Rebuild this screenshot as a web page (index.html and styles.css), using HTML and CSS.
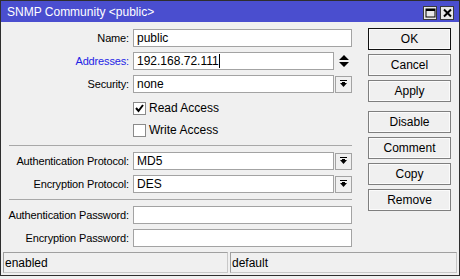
FILE: index.html
```html
<!DOCTYPE html>
<html>
<head>
<meta charset="utf-8">
<link rel="stylesheet" href="styles.css">
</head>
<body>
<div class="window">
  <div class="titlebar">
    <span class="title">SNMP Community &lt;public&gt;</span>
    <div class="tbtns">
      <div class="tbtn"><svg width="11" height="10" viewBox="0 0 11 10"><rect x="1" y="1" width="9" height="8" fill="none" stroke="#000" stroke-width="1"/><rect x="1" y="1" width="9" height="2" fill="#000"/></svg></div>
      <div class="tbtn"><svg width="11" height="10" viewBox="0 0 11 10"><path d="M2 1.5 L9 8.5 M9 1.5 L2 8.5" stroke="#000" stroke-width="2" fill="none"/></svg></div>
    </div>
  </div>
  <div class="content">
    <div class="form">
      <div class="row">
        <label class="lbl">Name:</label>
        <div class="ctl"><div class="field wide">public</div></div>
      </div>
      <div class="row">
        <label class="lbl blue">Addresses:</label>
        <div class="ctl"><div class="field">192.168.72.111<span class="caret"></span></div>
          <div class="updown"><svg width="10" height="13" viewBox="0 0 10 13"><path d="M5 0 L10 5 L0 5 Z M0 7 L10 7 L5 12 Z" fill="#000"/></svg></div>
        </div>
      </div>
      <div class="row">
        <label class="lbl">Security:</label>
        <div class="ctl"><div class="field">none</div><div class="drop"><svg width="7" height="8" viewBox="0 0 7 8"><rect x="0" y="0" width="7" height="1" fill="#000"/><path d="M0 3 L7 3 L3.5 7 Z" fill="#000"/><rect x="2" y="2" width="3" height="2" fill="#000"/></svg></div></div>
      </div>
      <div class="crow first">
        <span class="spacer"></span>
        <div class="check"><span class="box"><svg width="11" height="11" viewBox="0 0 11 11"><path d="M2 5 L4.5 8 L9 2" stroke="#000" stroke-width="2" fill="none"/></svg></span><span>Read Access</span></div>
      </div>
      <div class="crow">
        <span class="spacer"></span>
        <div class="check"><span class="box"></span><span>Write Access</span></div>
      </div>
      <div class="sep sep1"></div>
      <div class="row">
        <label class="lbl">Authentication Protocol:</label>
        <div class="ctl"><div class="field">MD5</div><div class="drop"><svg width="7" height="8" viewBox="0 0 7 8"><rect x="0" y="0" width="7" height="1" fill="#000"/><path d="M0 3 L7 3 L3.5 7 Z" fill="#000"/><rect x="2" y="2" width="3" height="2" fill="#000"/></svg></div></div>
      </div>
      <div class="row">
        <label class="lbl">Encryption Protocol:</label>
        <div class="ctl"><div class="field">DES</div><div class="drop"><svg width="7" height="8" viewBox="0 0 7 8"><rect x="0" y="0" width="7" height="1" fill="#000"/><path d="M0 3 L7 3 L3.5 7 Z" fill="#000"/><rect x="2" y="2" width="3" height="2" fill="#000"/></svg></div></div>
      </div>
      <div class="sep sep2"></div>
      <div class="row">
        <label class="lbl">Authentication Password:</label>
        <div class="ctl"><div class="field wide"></div></div>
      </div>
      <div class="row">
        <label class="lbl">Encryption Password:</label>
        <div class="ctl"><div class="field wide"></div></div>
      </div>
    </div>
    <div class="buttons">
      <div class="btn ok">OK</div>
      <div class="btn">Cancel</div>
      <div class="btn">Apply</div>
      <div class="btn gapped">Disable</div>
      <div class="btn">Comment</div>
      <div class="btn">Copy</div>
      <div class="btn">Remove</div>
    </div>
  </div>
  <div class="status">
    <div class="pane p1">enabled</div>
    <div class="pane p2">default</div>
  </div>
</div>
</body>
</html>
```
FILE: styles.css
```css
html, body {
  margin: 0;
  padding: 0;
  background: #f0f0f0;
}
body {
  width: 460px;
  height: 279px;
  overflow: hidden;
  font-family: "Liberation Sans", Arial, sans-serif;
  font-size: 11px;
  color: #000;
}
.window {
  width: 458px;
  height: 274px;
  border: 1px solid #2e2e2e;
  background: #f0f0f0;
  display: flex;
  flex-direction: column;
}
.titlebar {
  height: 21px;
  background: #4a4ecf;
  display: flex;
  align-items: center;
  justify-content: space-between;
  padding: 0 5px 0 6px;
}
.title {
  color: #fff;
  font-size: 12px;
  padding-top: 1px;
}
.tbtns {
  display: flex;
  gap: 3px;
  padding-top: 2px;
}
.tbtn {
  width: 12px;
  height: 12px;
  border: 1px solid #3a3a3a;
  background: #e8e8e8;
  display: flex;
  align-items: center;
  justify-content: center;
}
.content {
  display: flex;
  height: 230px;
}
.form {
  width: 351px;
  padding-top: 7px;
  display: flex;
  flex-direction: column;
}
.row {
  display: grid;
  grid-template-columns: 128px 219px;
  column-gap: 4px;
  align-items: center;
  height: 18px;
  margin-bottom: 5px;
}
.lbl {
  text-align: right;
  white-space: nowrap;
  letter-spacing: -0.15px;
}
.lbl.blue {
  color: #1f1fe6;
}
.ctl {
  display: flex;
  align-items: center;
  gap: 1px;
  height: 18px;
}
.field {
  box-sizing: border-box;
  height: 18px;
  width: 201px;
  background: #fff;
  border: 1px solid #a3a3a3;
  padding: 1px 0 0 3px;
  line-height: 14px;
  font-size: 12px;
  white-space: nowrap;
}
.field.wide {
  width: 219px;
}
.caret {
  display: inline-block;
  width: 1px;
  height: 14px;
  background: #000;
  vertical-align: top;
}
.updown {
  width: 17px;
  height: 18px;
  display: flex;
  align-items: center;
  justify-content: center;
}
.drop {
  box-sizing: border-box;
  width: 17px;
  height: 17px;
  border: 1px solid #a3a3a3;
  background: #f0f0f0;
  display: flex;
  align-items: center;
  justify-content: center;
}
.crow {
  display: grid;
  grid-template-columns: 128px 219px;
  column-gap: 4px;
  height: 13px;
  margin-bottom: 9px;
}
.crow.first {
  margin-top: 3px;
}
.check {
  display: flex;
  align-items: center;
  gap: 3px;
  font-size: 12px;
}
.box {
  box-sizing: border-box;
  width: 13px;
  height: 13px;
  border: 1px solid #8a8a8a;
  background: #fff;
  display: flex;
  align-items: center;
  justify-content: center;
}
.sep {
  height: 1px;
  background: #a8a8a8;
  margin-left: 8px;
  width: 343px;
}
.sep1 {
  margin-top: 0;
  margin-bottom: 6px;
}
.sep2 {
  margin-top: 1px;
  margin-bottom: 6px;
}
.buttons {
  display: flex;
  flex-direction: column;
  gap: 4px;
  padding-top: 6px;
  margin-left: 16px;
}
.btn {
  box-sizing: border-box;
  width: 83px;
  height: 22px;
  border: 1px solid #7f7f7f;
  background: #f0f0f0;
  box-shadow: inset 0 0 0 1px #fbfbfb;
  display: flex;
  align-items: center;
  justify-content: center;
  font-size: 12px;
}
.btn.ok {
  border: 1px solid #111;
  box-shadow: inset 0 0 0 1px #fbfbfb;
}
.btn.gapped {
  margin-top: 5px;
}
.status {
  display: flex;
  gap: 2px;
  padding: 0 2px 0 2px;
}
.pane {
  box-sizing: border-box;
  height: 21px;
  border: 1px solid #c8c8c8;
  border-top-color: #a0a0a0;
  border-left-color: #a0a0a0;
  padding: 3px 0 0 1px;
  font-size: 12px;
}
.p1 {
  width: 225px;
}
.p2 {
  width: 227px;
}
```
